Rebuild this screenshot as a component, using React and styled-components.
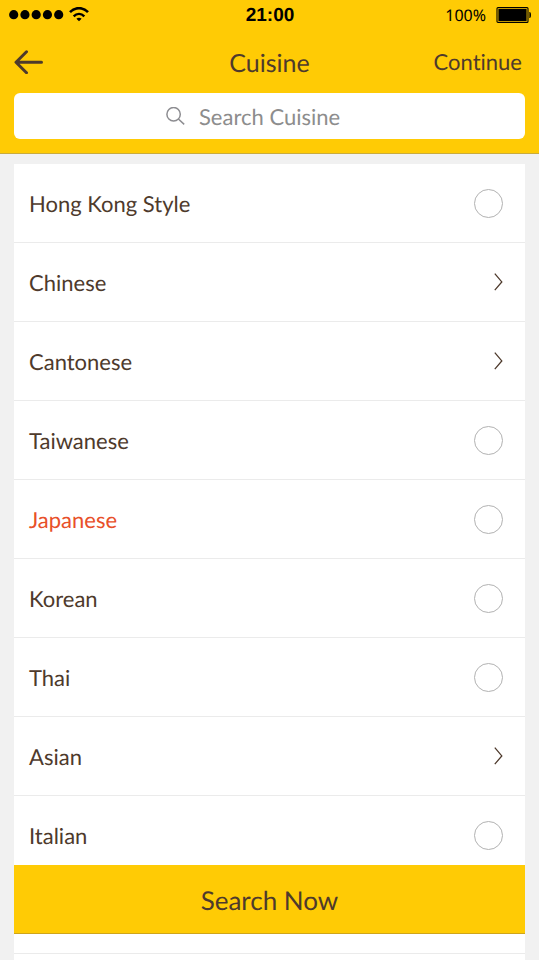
import React, { useState } from "react";
import styled, { createGlobalStyle } from "styled-components";

const cuisines = [
  { id: "hongkong", name: "Hong Kong Style" },
  { id: "chinese", name: "Chinese", hasSub: true },
  { id: "cantonese", name: "Cantonese", hasSub: true },
  { id: "taiwanese", name: "Taiwanese" },
  { id: "japanese", name: "Japanese", highlight: true },
  { id: "korean", name: "Korean" },
  { id: "thai", name: "Thai" },
  { id: "asian", name: "Asian", hasSub: true },
  { id: "italian", name: "Italian" },
];

export default function App() {
  const [keyword, setKeyword] = useState("");
  const [picked, setPicked] = useState([]);

  const handlePick = (id) => {
    picked.includes(id)
      ? setPicked(picked.filter((item) => item !== id))
      : setPicked([...picked, id]);
  };

  return (
    <Screen>
      <GlobalStyle />
      <Header>
        <StatusBar />
        <NavBar>
          <BackButton type="button" aria-label="Back">
            <svg width="30" height="24" viewBox="0 0 30 24">
              <path
                d="M12.5 1.8 L2 12.3 L12.5 22.8 M2.4 12.3 H27.5"
                fill="none"
                stroke="#4e3a2c"
                strokeWidth="3"
                strokeLinecap="round"
                strokeLinejoin="round"
              />
            </svg>
          </BackButton>
          <Title>Cuisine</Title>
          <ContinueButton type="button">Continue</ContinueButton>
        </NavBar>
        <SearchBox>
          <svg width="19" height="19" viewBox="0 0 19 19" aria-hidden="true">
            <g fill="none" stroke="#8d8d91" strokeWidth="1.5">
              <circle cx="7.6" cy="7.2" r="6.7" />
              <path d="M12.4 12 L18.2 17.4" />
            </g>
          </svg>
          <SearchInput
            type="text"
            aria-label="Search Cuisine"
            placeholder="Search Cuisine"
            value={keyword}
            onChange={(e) => setKeyword(e.target.value)}
          />
        </SearchBox>
      </Header>

      <List>
        {cuisines.map((item) => (
          <Item key={item.id}>
            {item.hasSub ? (
              <SubButton type="button">
                {item.name}
                <svg width="9" height="18" viewBox="0 0 9 18">
                  <path
                    d="M0.8 0.6 L7.8 8.9 L0.8 17.2"
                    fill="none"
                    stroke="#4e3a2c"
                    strokeWidth="1.3"
                  />
                </svg>
              </SubButton>
            ) : (
              <PickLabel $highlight={item.highlight}>
                {item.name}
                <Pick
                  type="checkbox"
                  checked={picked.includes(item.id)}
                  onChange={() => handlePick(item.id)}
                />
              </PickLabel>
            )}
          </Item>
        ))}
        <Item aria-hidden="true" />
        <Item aria-hidden="true" />
      </List>

      <SearchButton type="button">Search Now</SearchButton>
    </Screen>
  );
}

function StatusBar() {
  return (
    <Status>
      <Signal>
        <svg width="55" height="10" viewBox="0 0 55 10">
          {[4.7, 15.95, 27.2, 38.45, 49.7].map((x) => (
            <circle key={x} cx={x} cy="4.7" r="4.6" />
          ))}
        </svg>
        <svg width="20" height="16" viewBox="0 0 20 16">
          <path
            d="M1 5.2 C6 -0.2 14 -0.2 19 5.2"
            fill="none"
            stroke="#000"
            strokeWidth="2.6"
          />
          <path
            d="M4.7 9.3 C7.8 6.1 12.2 6.1 15.3 9.3"
            fill="none"
            stroke="#000"
            strokeWidth="2.4"
          />
          <path d="M10 14.2 L7.4 11.7 C8.8 10.4 11.2 10.4 12.6 11.7 Z" />
        </svg>
      </Signal>
      <Clock>21:00</Clock>
      <Battery>
        100%
        <svg width="35" height="16" viewBox="0 0 35 16">
          <rect
            x="1"
            y="0.6"
            width="31"
            height="14.8"
            rx="1"
            fill="none"
            stroke="#000"
            strokeWidth="1.1"
          />
          <rect x="2.4" y="2" width="28.2" height="12" />
          <path d="M33.4 5 H34 Q35 5.4 35 8 Q35 10.6 34 11 H33.4 Z" />
        </svg>
      </Battery>
    </Status>
  );
}

const GlobalStyle = createGlobalStyle`
  body {
    margin: 0;
    background-color: #f1f1f1;
  }
  * {
    box-sizing: border-box;
  }
  button,
  input {
    font-family: inherit;
    color: inherit;
    text-rendering: inherit;
  }
`;

const Screen = styled.div`
  position: relative;
  display: flex;
  flex-direction: column;
  height: 100vh;
  overflow: hidden;
  background-color: #f1f1f1;
  color: #4e3a2c;
  font-family: Lato, "Liberation Sans", sans-serif;
  font-variant-ligatures: none;
  text-rendering: geometricPrecision;
`;

const Header = styled.header`
  flex-shrink: 0;
  padding-bottom: 14px;
  background-color: #ffcb05;
  border-bottom: 1px solid #c9ab3c;
`;

const Status = styled.div`
  display: grid;
  grid-template-columns: 1fr auto 1fr;
  align-items: center;
  height: 30px;
  padding: 0 8px 0 9px;
  color: black;
`;

const Signal = styled.div`
  display: flex;
  align-items: center;
  gap: 5px;
`;

const Clock = styled.span`
  padding-top: 2px;
  font-family: "Liberation Sans", sans-serif;
  font-size: 19px;
  font-weight: bold;
`;

const Battery = styled.div`
  display: flex;
  justify-content: flex-end;
  align-items: center;
  gap: 10px;
  font-family: "Noto Sans", sans-serif;
  font-size: 16px;
`;

const NavBar = styled.nav`
  display: grid;
  grid-template-columns: 1fr auto 1fr;
  align-items: center;
  height: 63px;
  padding: 0 14px;
`;

const BackButton = styled.button`
  display: flex;
  justify-self: start;
  border: none;
  background: none;
  padding: 0;
  cursor: pointer;
`;

const Title = styled.h1`
  margin: 0;
  padding-top: 2px;
  font-size: 25px;
  font-weight: 400;
`;

const ContinueButton = styled.button`
  justify-self: end;
  border: none;
  background: none;
  padding: 0 3px;
  font-size: 22px;
  font-variant-ligatures: none;
  cursor: pointer;
`;

const SearchBox = styled.div`
  display: flex;
  justify-content: center;
  align-items: center;
  gap: 14px;
  height: 46px;
  margin: 0 14px;
  border-radius: 6px;
  background-color: white;
`;

const SearchInput = styled.input`
  width: 174px;
  border: none;
  outline: none;
  padding: 0;
  background: none;
  font-size: 22px;
  &::placeholder {
    color: #8d8d8d;
    opacity: 1;
  }
`;

const List = styled.ul`
  flex: 1;
  min-height: 0;
  overflow-y: auto;
  scrollbar-width: none;
  list-style: none;
  margin: 10px 14px 0;
  padding: 0;
  background-color: white;
`;

const Item = styled.li`
  display: flex;
  height: 79px;
  border-bottom: 1px solid #ebebeb;
`;

const PickLabel = styled.label`
  flex: 1;
  display: flex;
  justify-content: space-between;
  align-items: center;
  padding: 0 22px 0 15px;
  font-size: 22px;
  color: ${(props) => (props.$highlight ? "#e8502a" : "inherit")};
  cursor: pointer;
`;

const SubButton = styled.button`
  flex: 1;
  display: flex;
  justify-content: space-between;
  align-items: center;
  border: none;
  background: none;
  padding: 0 22px 0 15px;
  font-size: 22px;
  cursor: pointer;
`;

const Pick = styled.input`
  appearance: none;
  width: 29px;
  height: 29px;
  margin: 0;
  border: 1px solid #b2b2b2;
  border-radius: 50%;
  background-color: white;
  cursor: pointer;
  &:checked {
    background-color: #ffcb05;
  }
`;

const SearchButton = styled.button`
  position: absolute;
  left: 14px;
  right: 14px;
  bottom: 26px;
  height: 69px;
  border: none;
  border-bottom: 1px solid #cfa51a;
  padding: 2px 0 0;
  background-color: #ffcb05;
  font-size: 26px;
  cursor: pointer;
`;
